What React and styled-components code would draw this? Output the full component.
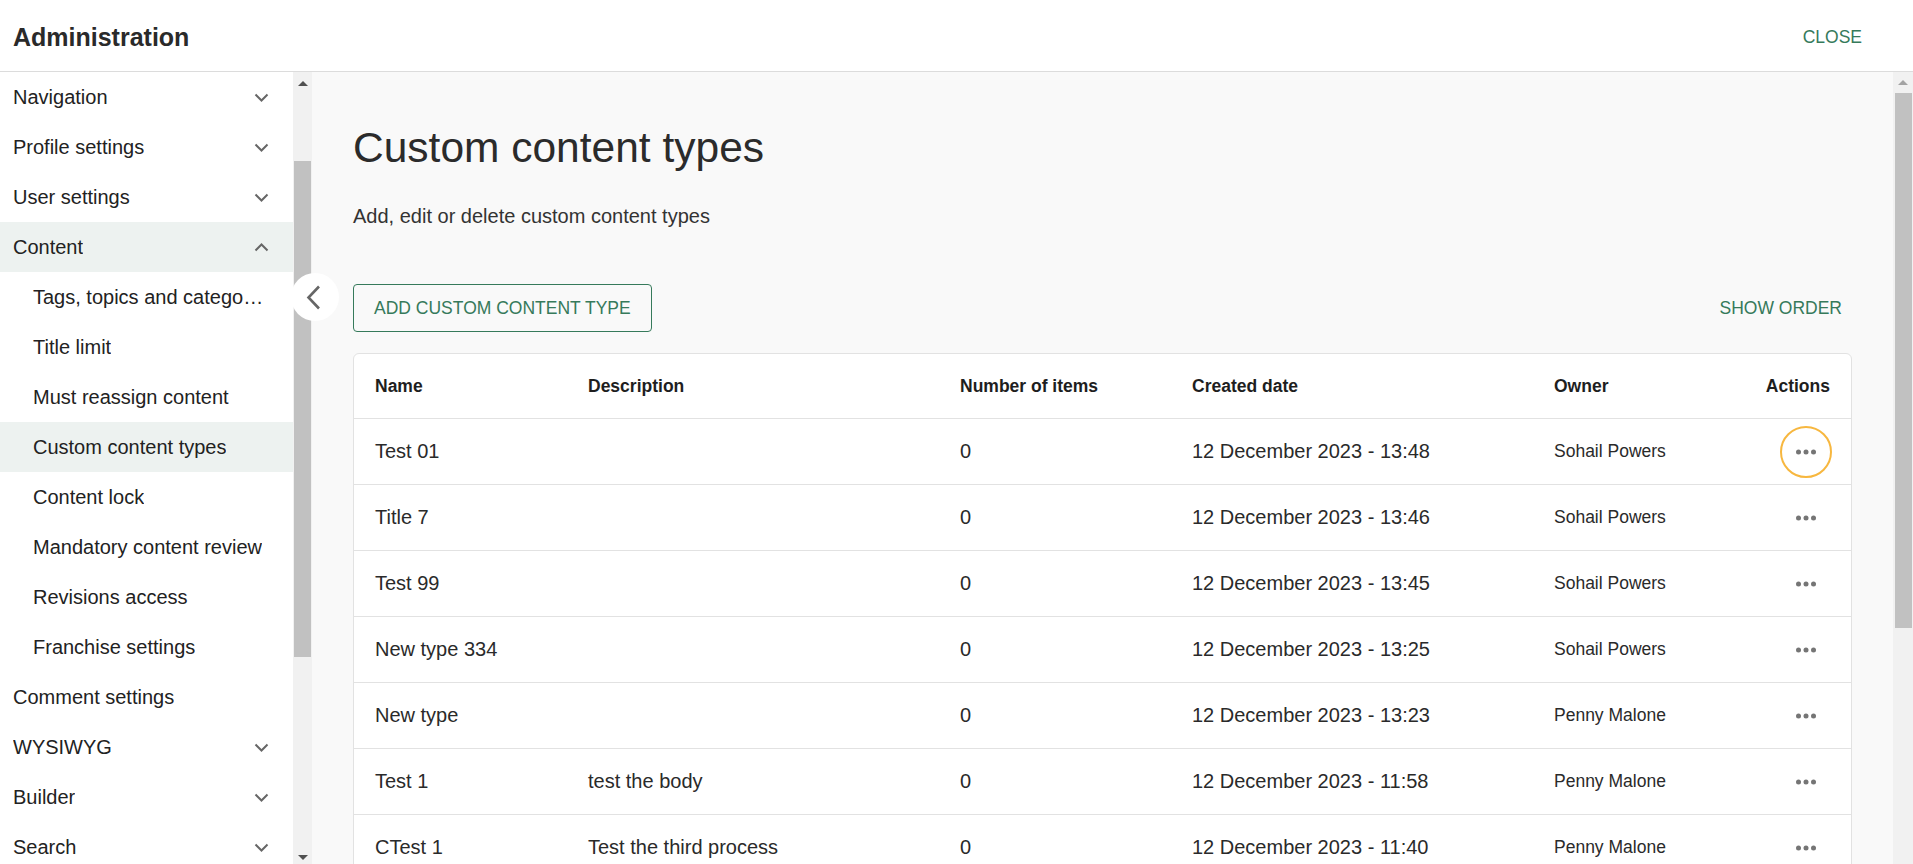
import styled, { createGlobalStyle } from 'styled-components'

const GREEN = '#367a5b'

const GlobalStyle = createGlobalStyle`
  html, body {
    margin: 0;
    padding: 0;
    overflow: hidden;
  }
  body {
    font-family: "Liberation Sans", Arial, sans-serif;
    color: #222;
    background: #fff;
  }
  * { box-sizing: border-box; }
`

const menu = [
  { label: 'Navigation', chevron: 'down' },
  { label: 'Profile settings', chevron: 'down' },
  { label: 'User settings', chevron: 'down' },
  { label: 'Content', chevron: 'up', open: true },
  { label: 'Tags, topics and categories', sub: true },
  { label: 'Title limit', sub: true },
  { label: 'Must reassign content', sub: true },
  { label: 'Custom content types', sub: true, active: true },
  { label: 'Content lock', sub: true },
  { label: 'Mandatory content review', sub: true },
  { label: 'Revisions access', sub: true },
  { label: 'Franchise settings', sub: true },
  { label: 'Comment settings' },
  { label: 'WYSIWYG', chevron: 'down' },
  { label: 'Builder', chevron: 'down' },
  { label: 'Search', chevron: 'down' },
]

const rows = [
  { name: 'Test 01', desc: '', count: 0, date: '12 December 2023 - 13:48', owner: 'Sohail Powers', focused: true },
  { name: 'Title 7', desc: '', count: 0, date: '12 December 2023 - 13:46', owner: 'Sohail Powers' },
  { name: 'Test 99', desc: '', count: 0, date: '12 December 2023 - 13:45', owner: 'Sohail Powers' },
  { name: 'New type 334', desc: '', count: 0, date: '12 December 2023 - 13:25', owner: 'Sohail Powers' },
  { name: 'New type', desc: '', count: 0, date: '12 December 2023 - 13:23', owner: 'Penny Malone' },
  { name: 'Test 1', desc: 'test the body', count: 0, date: '12 December 2023 - 11:58', owner: 'Penny Malone' },
  { name: 'CTest 1', desc: 'Test the third process', count: 0, date: '12 December 2023 - 11:40', owner: 'Penny Malone' },
]

const Chevron = ({ dir = 'down' }) => (
  <svg width="15" height="9" viewBox="0 0 15 9" fill="none">
    <path
      d={dir === 'down' ? 'M1.5 1.5 L7.5 7.5 L13.5 1.5' : 'M1.5 7.5 L7.5 1.5 L13.5 7.5'}
      stroke="#666"
      strokeWidth="2"
    />
  </svg>
)

const Dots = () => (
  <svg width="20" height="6" viewBox="0 0 20 6">
    <circle cx="2.5" cy="3" r="2.5" fill="#757575" />
    <circle cx="10" cy="3" r="2.5" fill="#757575" />
    <circle cx="17.5" cy="3" r="2.5" fill="#757575" />
  </svg>
)

const Page = styled.div`
  height: 100vh;
  display: flex;
  flex-direction: column;
`

const TopBar = styled.header`
  height: 72px;
  flex: none;
  display: flex;
  align-items: center;
  justify-content: space-between;
  padding: 4px 51px 0 13px;
  border-bottom: 1px solid #dcdcdc;
`

const AppTitle = styled.h1`
  margin: 0;
  font-size: 25px;
  font-weight: 700;
  color: #2a2a2a;
`

const TextButton = styled.button`
  border: none;
  background: none;
  padding: 0 ${(p) => p.$pad || 0}px;
  height: 48px;
  font-family: inherit;
  font-size: 17.5px;
  color: ${GREEN};
  text-transform: uppercase;
  cursor: pointer;
`

const Body = styled.div`
  flex: 1;
  min-height: 0;
  display: flex;
  position: relative;
`

const Sidebar = styled.nav`
  width: 293px;
  flex: none;
  overflow: hidden;
  background: #fff;
`

const MenuItem = styled.div`
  height: 50px;
  display: flex;
  align-items: center;
  justify-content: space-between;
  gap: 12px;
  padding: 0 24px 0 ${(p) => (p.$sub ? 33 : 13)}px;
  font-size: 20px;
  color: #222;
  background: ${(p) => (p.$active ? '#edf2f0' : 'transparent')};
`

const MenuLabel = styled.span`
  white-space: nowrap;
  overflow: hidden;
  text-overflow: ellipsis;
`

const Rail = styled.div`
  width: ${(p) => p.$width}px;
  flex: none;
  background: #f1f1f1;
  display: flex;
  flex-direction: column;
  align-items: center;
  overflow: hidden;
`

const ArrowBox = styled.div`
  height: ${(p) => p.$h}px;
  flex: none;
  display: flex;
  align-items: center;
  justify-content: center;
  margin-top: ${(p) => (p.$bottom ? 'auto' : 0)};
`

const Triangle = styled.span`
  width: 0;
  height: 0;
  border-left: 5px solid transparent;
  border-right: 5px solid transparent;
  ${(p) =>
    p.$down
      ? `border-top: 5px solid ${p.$color};`
      : `border-bottom: 5px solid ${p.$color};`}
`

const Thumb = styled.div`
  width: 17px;
  flex: none;
  background: #c1c1c1;
  margin-top: ${(p) => p.$top}px;
  height: ${(p) => p.$height}px;
`

const CollapseButton = styled.button`
  position: absolute;
  left: 291px;
  top: 201px;
  width: 48px;
  height: 48px;
  border-radius: 50%;
  border: none;
  background: #fff;
  display: flex;
  align-items: center;
  justify-content: center;
  padding: 0 4px 0 0;
  cursor: pointer;
`

const Main = styled.main`
  flex: 1;
  min-width: 0;
  background: #f9f9f9;
  padding: 50px 41px 0;
  overflow: hidden;
`

const PageTitle = styled.h2`
  margin: 0;
  font-size: 42.5px;
  line-height: 51px;
  font-weight: 400;
  color: #2b2b2b;
`

const Lead = styled.p`
  margin: 28px 0 0;
  font-size: 20px;
  line-height: 30px;
  color: #333;
`

const ActionBar = styled.div`
  margin-top: 53px;
  display: flex;
  align-items: center;
  justify-content: space-between;
`

const OutlineButton = styled.button`
  height: 48px;
  padding: 0 20px;
  border: 1px solid ${GREEN};
  border-radius: 4px;
  background: transparent;
  font-family: inherit;
  font-size: 17.5px;
  color: ${GREEN};
  cursor: pointer;
`

const Card = styled.div`
  margin-top: 21px;
  background: #fff;
  border: 1px solid #e2e2e2;
  border-radius: 6px;
`

const Row = styled.div`
  display: grid;
  grid-template-columns: 213px 372px 232px 362px 1fr auto;
  align-items: center;
  height: ${(p) => (p.$head ? 65 : 66)}px;
  padding: 0 21px;
  border-bottom: 1px solid #e2e2e2;
`

const HeadCell = styled.div`
  font-size: 17.5px;
  font-weight: 700;
  color: #1e1e1e;
  white-space: nowrap;
  text-align: ${(p) => (p.$right ? 'right' : 'left')};
`

const Cell = styled.div`
  font-size: ${(p) => (p.$small ? 17.5 : 20)}px;
  color: #2a2a2a;
  white-space: nowrap;
`

const ActionCell = styled.div`
  display: flex;
  justify-content: flex-end;
`

const MoreButton = styled.button`
  width: 52px;
  height: 52px;
  margin-right: -2px;
  border-radius: 50%;
  border: 2px solid ${(p) => (p.$focused ? '#f7b73f' : 'transparent')};
  background: transparent;
  display: flex;
  align-items: center;
  justify-content: center;
  padding: 0;
  cursor: pointer;
`

const App = () => {
  return (
    <Page>
      <GlobalStyle />
      <TopBar>
        <AppTitle>Administration</AppTitle>
        <TextButton>Close</TextButton>
      </TopBar>
      <Body>
        <Sidebar>
          {menu.map((item) => (
            <MenuItem key={item.label} $sub={item.sub} $active={item.active || item.open}>
              <MenuLabel>{item.label}</MenuLabel>
              {item.chevron && <Chevron dir={item.chevron} />}
            </MenuItem>
          ))}
        </Sidebar>
        <Rail $width={19}>
          <ArrowBox $h={22}>
            <Triangle $color="#505050" />
          </ArrowBox>
          <Thumb $top={67} $height={496} />
          <ArrowBox $h={14} $bottom>
            <Triangle $down $color="#505050" />
          </ArrowBox>
        </Rail>
        <CollapseButton aria-label="Collapse">
          <svg width="15" height="25" viewBox="0 0 15 25" fill="none">
            <path d="M13 1.5 L2.5 12.5 L13 23.5" stroke="#666" strokeWidth="2.6" />
          </svg>
        </CollapseButton>
        <Main>
          <PageTitle>Custom content types</PageTitle>
          <Lead>Add, edit or delete custom content types</Lead>
          <ActionBar>
            <OutlineButton>ADD CUSTOM CONTENT TYPE</OutlineButton>
            <TextButton $pad={10}>Show order</TextButton>
          </ActionBar>
          <Card>
            <Row $head>
              <HeadCell>Name</HeadCell>
              <HeadCell>Description</HeadCell>
              <HeadCell>Number of items</HeadCell>
              <HeadCell>Created date</HeadCell>
              <HeadCell>Owner</HeadCell>
              <HeadCell $right>Actions</HeadCell>
            </Row>
            {rows.map((r) => (
              <Row key={r.name}>
                <Cell>{r.name}</Cell>
                <Cell>{r.desc}</Cell>
                <Cell>{r.count}</Cell>
                <Cell>{r.date}</Cell>
                <Cell $small>{r.owner}</Cell>
                <ActionCell>
                  <MoreButton $focused={r.focused} aria-label="More actions">
                    <Dots />
                  </MoreButton>
                </ActionCell>
              </Row>
            ))}
          </Card>
        </Main>
        <Rail $width={20}>
          <ArrowBox $h={21}>
            <Triangle $color="#a3a3a3" />
          </ArrowBox>
          <Thumb $top={0} $height={535} />
        </Rail>
      </Body>
    </Page>
  )
}

export default App
